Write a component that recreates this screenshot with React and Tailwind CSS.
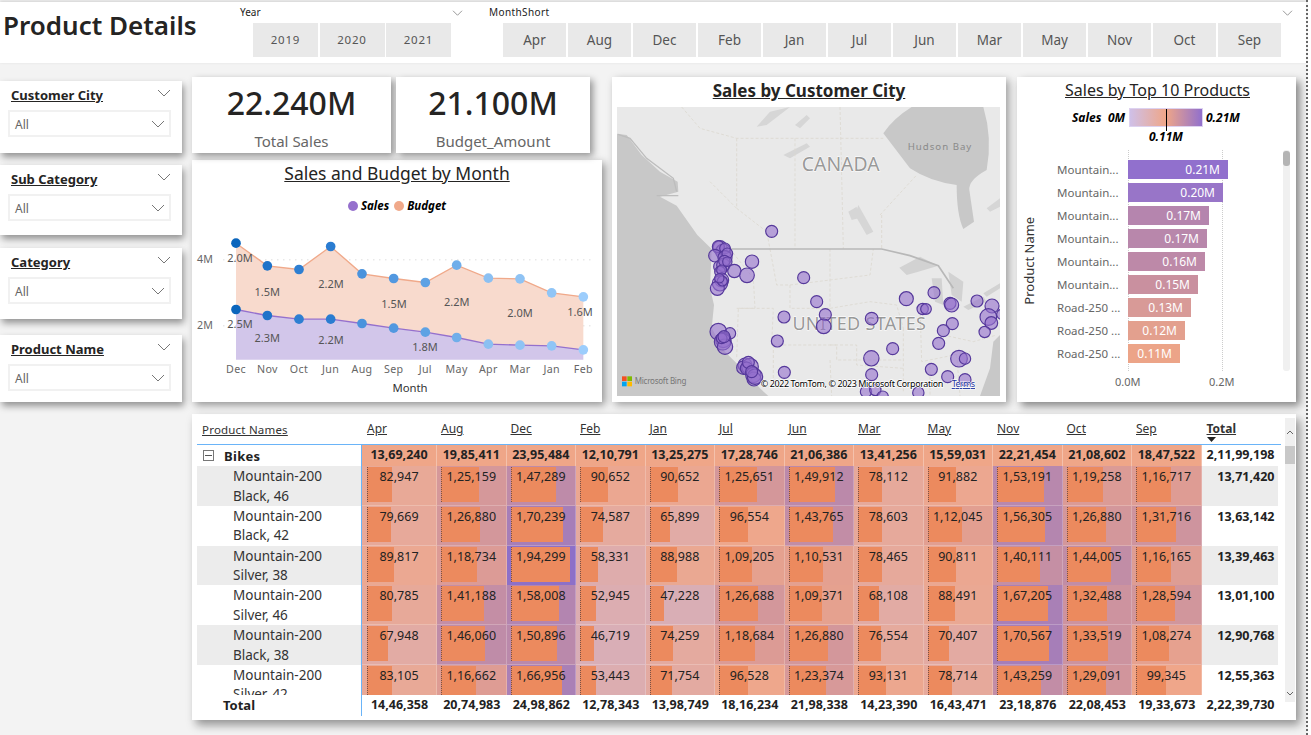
import React from "react";

const FONT = { fontFamily: '"Noto Sans", "Open Sans", sans-serif' };
const MONTHS = ["Apr","Aug","Dec","Feb","Jan","Jul","Jun","Mar","May","Nov","Oct","Sep"];
const ROWS = [
  ["Mountain-200","Black, 46",[82947,125159,147289,90652,90652,125651,149912,78112,91882,153191,119258,116717],"13,71,420"],
  ["Mountain-200","Black, 42",[79669,126880,170239,74587,65899,96554,143765,78603,112045,156305,126880,131716],"13,63,142"],
  ["Mountain-200","Silver, 38",[89817,118734,194299,58331,88988,109205,110531,78465,90811,140111,144005,116165],"13,39,463"],
  ["Mountain-200","Silver, 46",[80785,141188,158008,52945,47228,126688,109371,68108,88491,167205,132488,128594],"13,01,100"],
  ["Mountain-200","Black, 38",[67948,146060,150896,46719,74259,118684,126880,76554,70407,170567,133519,108274],"12,90,768"],
  ["Mountain-200","Silver, 42",[83105,116662,166956,53443,71754,96528,123374,93131,78714,143259,129091,99345],"12,55,363"],
];
const BIKES = ["13,69,240","19,85,411","23,95,484","12,10,791","13,25,275","17,28,746","21,06,386","13,41,256","15,59,031","22,21,454","21,08,602","18,47,522"];
const TOTALS = ["14,46,358","20,74,983","24,98,862","12,78,343","13,98,749","18,16,234","21,98,338","14,23,390","16,43,471","23,18,876","22,08,453","19,33,673"];
const GRID = "grid grid-cols-[165px_75px_repeat(11,69.5px)_76px]";

function fmt(n) {
  const s = String(n);
  if (s.length <= 3) return s;
  const last = s.slice(-3);
  let rest = s.slice(0, -3);
  const parts = [];
  while (rest.length > 2) { parts.unshift(rest.slice(-2)); rest = rest.slice(0, -2); }
  if (rest) parts.unshift(rest);
  return parts.join(",") + "," + last;
}
function mix(a, b, t) {
  return `rgb(${a.map((v, i) => Math.round(v + (b[i] - v) * t)).join(",")})`;
}
function cellColor(v) {
  const low = [198,181,221], mid = [239,166,137], high = [141,112,200];
  return v < 100000 ? mix(low, mid, v / 100000) : mix(mid, high, Math.min(1, (v - 100000) / 94299));
}

function Chevron({ small = false, className = "" }) {
  return (
    <svg width={small ? 11 : 14} height={small ? 6 : 8} viewBox="0 0 14 8" className={className}>
      <polyline points="1,1 7,7 13,1" fill="none" stroke="#777" strokeWidth="1" />
    </svg>
  );
}

function Slicer({ title, h, mt }) {
  return (
    <div style={{ height: h, marginTop: mt }} className="bg-white w-[182px] shadow-[2px_4px_7px_rgba(0,0,0,0.4)] px-[8px] pt-[4px]">
      <div className="flex justify-between items-start h-[25px] pl-[3px] pr-[1px]">
        <span className="text-[13px] font-bold underline text-[#252423] leading-[20px]">{title}</span>
        <Chevron className="mt-[4px] mr-[2px]" />
      </div>
      <div className="h-[27px] w-[163px] border-2 border-[#f1f1f1] flex items-center justify-between pl-[5px] pr-[4px]">
        <span className="text-[12px] text-[#666] pt-[3px]">All</span>
        <Chevron />
      </div>
    </div>
  );
}

function Kpi({ value, label, cls }) {
  return (
    <div className={`bg-white shadow-[3px_3px_7px_rgba(0,0,0,0.4)] flex flex-col items-center ${cls}`}>
      <div className="text-[32px] font-medium text-[#252423] leading-[40px] mt-[6px]">{value}</div>
      <div className="text-[15px] text-[#666] leading-[20px] mt-[8px]">{label}</div>
    </div>
  );
}

const LINE_X = [138,232,327,422,516,611,706,800,895,990,1085,1180];
const BUDGET_Y = [265,333,344,275,357,371,383,331,370,372,414,426];
const SALES_Y = [464,482,493,493,506,520,532,548,568,571,573,585];
const DOTS = ["#0b65bc","#1f73c9","#2e7fd2","#2a7cd1","#4a93dd","#5298e0","#5ea2e4","#70aeea","#8cc0f2","#8fc3f4","#90c5f6","#9ccdfc"];
const LINE_M = ["Dec","Nov","Oct","Jun","Aug","Sep","Jul","May","Apr","Mar","Jan","Feb"];
const LABELS = [
  ["2.0M",150,322],["1.5M",232,423],["2.2M",423,401],["1.5M",612,461],["2.2M",800,453],["2.0M",990,487],["1.6M",1170,484],
  ["2.5M",150,521],["2.3M",232,562],["2.2M",423,568],["1.8M",705,589],
];

function LineChart() {
  const top = LINE_X.map((x, i) => `${x},${BUDGET_Y[i]}`).join(" ");
  const sales = LINE_X.map((x, i) => `${x},${SALES_Y[i]}`).join(" ");
  return (
    <svg viewBox="6 190 1230 551" className="w-[410px] h-[184px] block">
      <line x1="100" x2="1215" y1="315" y2="315" stroke="#ccc" strokeWidth="3" strokeDasharray="3 15" />
      <line x1="100" x2="1215" y1="513" y2="513" stroke="#ccc" strokeWidth="3" strokeDasharray="3 15" />
      <polygon points={`${top} 1180,585 ${[...LINE_X].reverse().map((x, i) => `${x},${[...SALES_Y].reverse()[i]}`).join(" ")}`} fill="#f8dacd" />
      <polygon points={`${sales} 1180,615 138,615`} fill="#d2c6ea" />
      <polyline points={top} fill="none" stroke="#f0a98a" strokeWidth="4" />
      <polyline points={sales} fill="none" stroke="#9570cd" strokeWidth="4" />
      {LINE_X.map((x, i) => (
        <g key={x}>
          <circle cx={x} cy={BUDGET_Y[i]} r="14.5" fill={DOTS[i]} />
          <circle cx={x} cy={SALES_Y[i]} r="14.5" fill={DOTS[i]} />
          <text x={x} y="656" textAnchor="middle" fontSize="32" fill="#666" letterSpacing="1">{LINE_M[i]}</text>
        </g>
      ))}
      {LABELS.map(([t, x, y]) => (
        <text key={t + x + y} x={x} y={y} textAnchor="middle" fontSize="33" fill="#555">{t}</text>
      ))}
      <text x="45" y="326" textAnchor="middle" fontSize="32" fill="#666">4M</text>
      <text x="45" y="524" textAnchor="middle" fontSize="32" fill="#666">2M</text>
      <text x="660" y="712" textAnchor="middle" fontSize="34" fill="#333">Month</text>
    </svg>
  );
}

const CIRCLES = [
  [485,469,18],[330,518,21],[340,530,23],[325,515,18],[345,520,16],[315,542,19],[345,548,21],[352,535,16],[330,575,19],[340,570,20],[330,590,16],[343,558,17],[352,560,14],[335,585,15],
  [373,588,20],[426,560,20],[411,601,22],[335,615,21],[330,625,23],[322,640,21],[337,618,15],[328,610,14],[581,608,18],
  [620,680,18],[522,726,18],[646,719,18],[641,754,22],[785,731,19],[889,671,21],[972,653,18],[938,702,17],
  [948,702,16],[1020,685,18],[1025,690,21],[1101,678,18],[1146,693,21],[1135,726,25],[1144,744,19],[1175,718,15],
  [1124,771,17],[1027,746,18],[1000,767,18],[986,805,18],[848,821,18],[784,850,23],[1047,851,25],[1065,851,17],
  [964,883,18],[1013,905,18],[1065,914,18],[785,899,18],[502,798,18],[523,892,18],[325,770,25],[360,775,17],
  [340,795,23],[338,800,25],[345,815,23],[335,790,16],[342,785,18],[405,870,21],[400,878,20],[420,875,25],[410,880,19],[415,862,18],[430,900,23],
  [432,912,21],[435,905,23],[425,890,18],[768,950,17],[796,945,17],[818,965,17],[925,953,17],
];
const BORDERS = [
  "M380 190 L380 400 L470 470 L480 522","M555 190 L555 522","M690 96 L695 300 L700 522","M215 96 L270 160 L380 190 L820 190",
  "M380 400 L300 320","M810 420 L920 300","M815 420 L815 522","M360 522 L430 610 L435 700 L385 700 L380 850",
  "M480 522 L500 630 L540 630 L540 700 L660 700 L660 522","M540 630 L780 600 L790 522","M660 700 L780 680 L860 690 L880 760",
  "M380 700 L490 700 L485 810 L680 810 L680 855 L880 855","M660 810 L740 810 L740 870 L880 880","M880 760 L880 950",
  "M930 690 L935 860 L1080 830","M1000 780 L1090 800 L1160 780","M960 860 L960 960","M1040 840 L1050 963","M490 810 L490 940",
  "M660 855 L665 963",
];

function MapView() {
  return (
    <svg viewBox="21 96 1149 867" className="w-[383px] h-[289px] block">
      <rect x="21" y="96" width="1149" height="867" fill="#e9e9e9" />
      <path d="M21 176 L50 180 L95 240 L150 290 L203 320 L205 350 L150 365 L200 392 L262 480 L305 522 L300 640 L312 690 L305 760 L345 830 L400 885 L450 940 L475 963 L21 963 Z" fill="#c8c8c8" />
      <path d="M820 175 Q850 130 905 96 L1120 96 Q1148 190 1130 285 Q1075 315 1078 345 L1092 440 L1060 462 Q1040 420 1040 330 Q960 320 900 280 Z" fill="#c8c8c8" />
      <path d="M1170 780 L1150 800 L1140 880 L1110 963 L1170 963 Z" fill="#c8c8c8" />
      <path d="M440 155 L480 110 L540 96 L470 150 Z M520 240 L590 205 L600 215 L540 250 Z M745 390 L790 470 L770 480 L735 420 Z M555 150 L590 120 L600 130 L570 160 Z M715 410 L740 395 L745 430 L725 435 Z M1130 400 L1170 370 L1170 395 L1140 410 Z" fill="#d6d6d6" />
      <path d="M868 578 L930 545 L985 572 L925 590 L890 600 Z M965 610 L995 610 L1000 690 L975 680 Z M1015 590 L1060 620 L1055 680 L1025 660 Z M1060 695 L1120 665 L1130 680 L1075 705 Z M1120 655 L1170 625 L1170 640 L1130 665 Z" fill="#d2d2d2" />
      {BORDERS.map((d) => (
        <path key={d} d={d} fill="none" stroke="#dcd8d0" strokeWidth="2.5" strokeDasharray="9 6" />
      ))}
      <path d="M360 522 L815 522 L900 542 L985 572 L1030 640" fill="none" stroke="#b8b8b8" strokeWidth="5" />
      <path d="M24 178 L60 190 L110 250 L190 310 L200 350 M140 362 L205 362" fill="none" stroke="#bdbdbd" strokeWidth="4" />
      <text x="692" y="288" textAnchor="middle" fontSize="58" fill="#999" stroke="#fff" strokeWidth="3" paintOrder="stroke">CANADA</text>
      <text x="748" y="766" textAnchor="middle" fontSize="54" fill="#999" stroke="#fff" strokeWidth="3" paintOrder="stroke" letterSpacing="1">UNITED STATES</text>
      <text x="990" y="224" textAnchor="middle" fontSize="29" fill="#8a8a8a" letterSpacing="3">Hudson Bay</text>
      {CIRCLES.map(([x, y, r], i) => (
        <circle key={i} cx={x} cy={y} r={r} fill="rgba(148,112,205,0.6)" stroke="#55389b" strokeWidth="3.5" />
      ))}
      <rect x="36" y="904" width="14" height="14" fill="#f25022" />
      <rect x="52" y="904" width="14" height="14" fill="#7fba00" />
      <rect x="36" y="920" width="14" height="14" fill="#00a4ef" />
      <rect x="52" y="920" width="14" height="14" fill="#ffb900" />
      <text x="74" y="928" fontSize="24" fill="#777" textLength="155">Microsoft Bing</text>
      <text x="452" y="936" fontSize="27" fill="#000" stroke="#fff" strokeWidth="4" paintOrder="stroke" textLength="548">© 2022 TomTom, © 2023 Microsoft Corporation</text>
      <text x="1025" y="936" fontSize="27" fill="#1a2f9c" textDecoration="underline" stroke="#fff" strokeWidth="3" paintOrder="stroke" textLength="70">Terms</text>
    </svg>
  );
}

const BARS = [
  ["Mountain...",100,"#9170cd","0.21M"],["Mountain...",95,"#9875c8","0.20M"],["Mountain...",81,"#b585ae","0.17M"],
  ["Mountain...",79,"#b887ab","0.17M"],["Mountain...",77,"#bd89a8","0.16M"],["Mountain...",70,"#c9909f","0.15M"],
  ["Road-250 ...",63,"#d89a97","0.13M"],["Road-250 ...",57,"#e3a08e","0.12M"],["Road-250 ...",52,"#eca488","0.11M"],
];

function BarChart() {
  return (
    <div className="w-[279px] ml-[11px] h-[325px] bg-white shadow-[4px_4px_8px_rgba(0,0,0,0.45)] flex flex-col">
      <div className="h-[28px] pb-[2px] flex items-center justify-center text-[16px] underline text-[#252423] leading-[26px] pl-[2px]">Sales by Top 10 Products</div>
      <div className="flex h-[42px] mt-[3px] text-[12px] font-bold italic text-black">
        <span className="ml-[55px] w-[36px] leading-[19px]">Sales</span>
        <span className="w-[21px] leading-[19px]">0M</span>
        <div className="relative w-[74px] h-[19px] bg-[linear-gradient(90deg,#cfc0e8,#efa688_50%,#9170cd)] border border-[#ddd2f0]">
          <div className="absolute left-[36px] top-0 w-px h-[22px] bg-black" />
          <span className="absolute left-[19px] top-[20px] leading-[16px]">0.11M</span>
        </div>
        <span className="ml-[3px] leading-[19px]">0.21M</span>
      </div>
      <div className="flex h-[221px]">
        <div className="w-[25px] flex items-center justify-center">
          <span className="-rotate-90 whitespace-nowrap text-[13px] text-[#333]">Product Name</span>
        </div>
        <div className="w-[86px] pt-[10px] flex flex-col gap-[4px] text-[11.5px] text-[#666]">
          {BARS.map(([n], i) => (
            <div key={i} className="h-[19px] leading-[19px] whitespace-nowrap pl-[15px]">{n}</div>
          ))}
        </div>
        <div className="relative w-[145px] pt-[10px] flex flex-col gap-[4px]">
          <div className="absolute left-0 top-0 bottom-0 border-l border-dotted border-[#ccc]" />
          <div className="absolute left-[94px] top-0 bottom-0 border-l border-dotted border-[#ccc]" />
          {BARS.map(([n, w, c, l], i) => (
            <div key={i} style={{ width: w, background: c }} className="relative h-[19px] leading-[19px] text-right pr-[8px] text-[12px] text-white">{l}</div>
          ))}
        </div>
        <div className="w-[7px] ml-[10px] bg-[#f0f0f0] rounded-[3px]">
          <div className="h-[15px] bg-[#b4b4b4] rounded-[3px] mt-[1px]" />
        </div>
      </div>
      <div className="relative h-[22px] text-[11px] text-[#666]">
        <span className="absolute left-[98px] top-[3px]">0.0M</span>
        <span className="absolute left-[192px] top-[3px]">0.2M</span>
      </div>
    </div>
  );
}

function Cell({ v, first }) {
  return (
    <div style={{ background: cellColor(v) }} className="relative h-full border-r border-b border-[rgba(255,255,255,0.22)] overflow-hidden">
      <div style={{ width: Math.round(v / 3290) }} className={`absolute top-[1px] bottom-[3px] bg-[#ec8a5e] border-l border-dotted border-[rgba(60,50,60,0.65)] ${first ? "left-[5px]" : "left-[4px]"}`} />
      <div className="relative text-center text-[12.5px] leading-[20px] pt-[1px] text-[#222]">{fmt(v)}</div>
    </div>
  );
}

function DataTable() {
  return (
    <div className="w-[1104px] h-[306px] mt-[12px] bg-white shadow-[4px_5px_9px_rgba(0,0,0,0.4)] pl-[5px] flex">
      <div className="w-[1084px] h-[302px]">
        <div className={`${GRID} h-[31px] border-b border-[#6ab4f8] items-end pb-[6px] text-[12px] text-[#333]`}>
          <div className="pl-[5px] underline text-[11.5px] tracking-[0.2px]">Product Names</div>
          {MONTHS.map((m, i) => (
            <div key={m} className={`underline ${i === 0 ? "pl-[5px]" : "pl-[4px]"}`}>{m}</div>
          ))}
          <div className="relative pl-[5px] font-bold underline">Total
            <svg width="9" height="5" viewBox="0 0 9 5" className="absolute left-[5px] top-[17px]"><polygon points="0,0 9,0 4.5,5" fill="#222" /></svg>
          </div>
        </div>
        <div className={`${GRID} h-[21px] text-[13px] font-bold leading-[20px] text-[#222]`}>
          <div className="flex items-center border-r border-[#6ab4f8] pl-[6px] gap-[10px]">
            <span className="w-[11px] h-[11px] border border-[#777] flex items-center justify-center"><span className="w-[7px] h-px bg-[#555]" /></span>
            <span className="tracking-[0.3px]">Bikes</span>
          </div>
          {BIKES.map((b) => (
            <div key={b} className="bg-[#efa688] text-center border-r border-[rgba(255,255,255,0.3)] text-[12.5px]">{b}</div>
          ))}
          <div className="text-right pr-[3px] text-[12.5px]">2,11,99,198</div>
        </div>
        <div className="h-[229px] overflow-hidden">
          {ROWS.map(([a, b, vals, total], i) => (
            <div key={b} className={`${GRID} h-[39.8px]`}>
              <div className={`border-r border-[#6ab4f8] pl-[36px] pt-[1px] text-[13.5px] leading-[19.5px] text-[#333] ${i % 2 === 0 ? "bg-[#ececec]" : "bg-white"}`}>
                <div>{a}</div><div>{b}</div>
              </div>
              {vals.map((v, j) => <Cell key={j} v={v} first={j === 0} />)}
              <div className={`text-right pr-[3px] pt-[1px] text-[12.5px] font-bold leading-[20px] text-[#222] ${i % 2 === 0 ? "bg-[#ececec]" : "bg-white"}`}>{total}</div>
            </div>
          ))}
        </div>
        <div className={`${GRID} h-[21px] text-[12.5px] font-bold leading-[20px] text-[#222]`}>
          <div className="border-r border-[#6ab4f8] pl-[26px] text-[13px]">Total</div>
          {TOTALS.map((t) => <div key={t} className="text-center">{t}</div>)}
          <div className="text-right pr-[3px]">2,22,39,730</div>
        </div>
      </div>
      <div className="w-[10px] ml-[4px] mt-[4px] h-[284px] bg-[#f0f0f0] flex flex-col items-center">
        <svg width="8" height="5" viewBox="0 0 8 5" className="mt-[12px]"><polyline points="1,4 4,1 7,4" fill="none" stroke="#666" /></svg>
        <div className="w-full h-[18px] bg-[#c8c8c8] mt-[11px]" />
        <svg width="8" height="5" viewBox="0 0 8 5" className="mt-auto mb-[6px]"><polyline points="1,1 4,4 7,1" fill="none" stroke="#666" /></svg>
      </div>
    </div>
  );
}

export default function App() {
  return (
    <div style={FONT} className="w-[1308px] h-[735px] overflow-hidden bg-[#f3f3f3] border-r-2 border-dotted border-[#666]">
      <div className="mt-[2px] h-[61px] bg-white flex shadow-[0_-1px_3px_rgba(0,0,0,0.15)]">
        <div className="w-[240px] pl-[3px] pt-[6px] text-[26px] font-semibold leading-[34px] text-[#252423] whitespace-nowrap">Product Details</div>
        <div className="w-[226px]">
          <div className="h-[21px] flex justify-between items-center text-[10px] text-[#222] pr-[3px]">
            <span>Year</span>
            <Chevron small />
          </div>
          <div className="flex gap-[1.5px] ml-[13px]">
            {["2019","2020","2021"].map((y) => (
              <div key={y} className="w-[65px] h-[34px] bg-[#e9e9e9] flex items-center justify-center text-[11.5px] text-[#555] tracking-[0.8px]">{y}</div>
            ))}
          </div>
        </div>
        <div className="w-[806px] ml-[23px]">
          <div className="h-[21px] flex justify-between items-center text-[10px] text-[#222] pr-[2px]">
            <span className="tracking-[0.4px]">MonthShort</span>
            <Chevron small />
          </div>
          <div className="flex gap-[2px] ml-[14px]">
            {MONTHS.map((m) => (
              <div key={m} className="w-[63px] h-[34px] bg-[#e9e9e9] flex items-center justify-center text-[13.5px] text-[#555]">{m}</div>
            ))}
          </div>
        </div>
      </div>
      <div className="flex">
        <div className="w-[182px] pt-[18px] shrink-0">
          <Slicer title="Customer City" h={72} mt={0} />
          <Slicer title="Sub Category" h={70} mt={12} />
          <Slicer title="Category" h={71} mt={13} />
          <Slicer title="Product Name" h={67} mt={16} />
        </div>
        <div className="ml-[10px] w-[1104px] pt-[14px]">
          <div className="flex h-[325px]">
            <div className="w-[410px] shrink-0">
              <div className="flex gap-[5px] h-[76px]">
                <Kpi value="22.240M" label="Total Sales" cls="w-[199px]" />
                <Kpi value="21.100M" label="Budget_Amount" cls="w-[194px]" />
              </div>
              <div className="mt-[7px] h-[242px] bg-white shadow-[3px_3px_8px_rgba(0,0,0,0.4)]">
                <div className="h-[26px] flex items-center justify-center text-[17.5px] underline text-[#252423] leading-[26px]">Sales and Budget by Month</div>
                <div className="h-[32px] pt-[8px] flex items-center justify-center text-[11.5px] font-bold italic text-black gap-[3px]">
                  <span className="w-[10px] h-[10px] rounded-full bg-[#9570cd]" />
                  <span className="mr-[2px]">Sales</span>
                  <span className="w-[10px] h-[10px] rounded-full bg-[#f0a98a]" />
                  <span>Budget</span>
                </div>
                <LineChart />
              </div>
            </div>
            <div className="w-[394px] ml-[10px] bg-white shadow-[3px_3px_8px_rgba(0,0,0,0.35)] px-[5px] shrink-0">
              <div className="h-[30px] pb-[2px] flex items-center justify-center text-[17px] font-bold underline text-[#252423]">Sales by Customer City</div>
              <MapView />
            </div>
            <BarChart />
          </div>
          <DataTable />
        </div>
      </div>
    </div>
  );
}
